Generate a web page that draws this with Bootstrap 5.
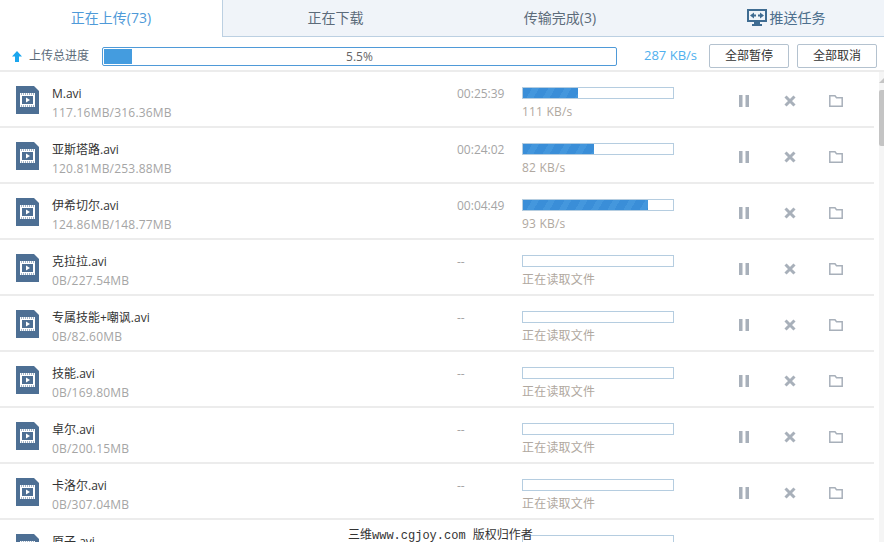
<!DOCTYPE html>
<html lang="zh-CN">
<head>
  <meta charset="UTF-8" />
  <title>传输列表</title>
  <link href="https://cdn.jsdelivr.net/npm/bootstrap@5.3.3/dist/css/bootstrap.min.css" rel="stylesheet">
  <style>
    html, body { height: 546px; overflow: hidden; }
    body { font-family: "Open Sans", "Noto Sans CJK SC", sans-serif; font-size: 13px; color: #333; background: #fff; }
    .tabbar { height: 37px; }
    .tabitem { line-height: 36px; font-size: 14px; color: #5c6b7a; background: #f0f4f9; border-bottom: 1px solid #bcd0e2; text-align: center; }
    .tabitem.on { flex: 0 0 222px; background: #fff; color: #4f9ad8; border-bottom-color: #fff; }
    .tabitem.second { flex: 0 0 226px; border-left: 1px solid #bcd0e2; }
    .tabitem.third { flex: 0 0 224px; }
    .tabitem svg { vertical-align: -3px; margin-right: 3px; }
    .pushtab { flex: 1; padding-left: 16px; color: #4d6f8d; }
    .toolbar { height: 35px; border-bottom: 2px solid #ececec; padding: 5px 7px 0 12px; }
    .uparrow { flex: none; margin-right: 7px; }
    .uplabel { width: 73px; flex: none; color: #5c6b7a; font-size: 12px; white-space: nowrap; }
    .totalbar { width: 515px; flex: none; height: 19px; border: 1px solid #4f9ad8; border-radius: 2px; padding: 1px; font-size: 12px; color: #666; line-height: 15px; }
    .totalfill { height: 15px; background: #449cdf; }
    .totaltext { left: 0; right: 0; top: 1px; text-align: center; }
    .totalspeed { width: 80px; flex: none; text-align: right; color: #4fb0ee; font-size: 13px; }
    .barbtn { width: 80px; flex: none; height: 24px; padding: 0; margin-left: 8px; margin-top: -1px; font-size: 12px; line-height: 21px; color: #333; border: 1px solid #b4c2cf; border-radius: 2px; background: #fff; }
    .barbtn.first { margin-left: 12px; }
    .rowlist { width: 874px; height: 470px; overflow: hidden; }
    .filerow { height: 56px; border-bottom: 2px solid #ececec; }
    .fileicon { width: 23px; margin: 14px 13px 0 16px; flex: none; }
    .fileinfo { width: 405px; flex: none; margin-top: 13px; }
    .fname { font-size: 12px; line-height: 18px; color: #333; }
    .fsize { font-size: 12px; line-height: 18px; color: #a5a5a5; margin-top: 1px; letter-spacing: .2px; }
    .ftime { width: 65px; flex: none; font-size: 12px; color: #a5a5a5; line-height: 18px; margin-top: 13px; }
    .fprog { width: 152px; flex: none; margin-top: 15px; }
    .pbar { height: 12px; border: 1px solid #b5cde0; background: #fff; }
    .pfill { height: 10px; background: repeating-linear-gradient(120deg, #3a8ed8 0 8px, #4497dd 8px 14px); }
    .pnote { font-size: 12px; line-height: 18px; color: #b0a8a0; margin-top: 4px; letter-spacing: .2px; }
    .acts { margin-left: 64px; gap: 34px; margin-top: 22px; }
    .acts svg:last-child { margin-left: -1px; }
    .scrolltrack { position: absolute; top: 72px; right: 0; width: 5px; height: 470px; background: #f5f5f5; }
    .scrollup { position: absolute; top: 6px; left: 0; width: 0; height: 0; border-left: 5px solid transparent; border-bottom: 5px solid #c4c4c4; }
    .scrollthumb { position: absolute; top: 18px; left: 0; width: 5px; height: 56px; background: #c4c4c4; border-radius: 2px 0 0 2px; }
    .stamp { position: absolute; left: 348px; top: 528px; font-size: 12px; line-height: 16px; color: #333; font-family: "Liberation Mono", "Noto Sans CJK SC", monospace; white-space: nowrap; }
  </style>
</head>
<body>
  <svg width="0" height="0" class="d-block">
    <symbol id="vid" viewBox="0 0 23 28">
      <path d="M0 0H18L23 5V28H0Z" fill="#4d6f94"/>
      <path d="M4 7H19V21H4Z" fill="#fff"/>
      <path d="M6 10H17V18H6Z" fill="#4d6f94"/>
      <path d="M10 11.500L14 14L10 16.500Z" fill="#fff"/>
      <path d="M5 8H18M5 20H18" stroke="#4d6f94" stroke-width="1" stroke-dasharray="1 1"/>
    </symbol>
    <symbol id="pause" viewBox="0 0 12 14"><path d="M1 1H4.500V13H1ZM7.500 1H11V13H7.500Z" fill="#a8b0ba"/></symbol>
    <symbol id="cross" viewBox="0 0 12 12"><path d="M1.500 1.500L10.500 10.500M10.500 1.500L1.500 10.500" stroke="#a8b0ba" stroke-width="3"/></symbol>
    <symbol id="folder" viewBox="0 0 14 12"><path d="M.8.8H6L7.500 2.800H13.200V11.200H.8Z" fill="none" stroke="#a8b0ba" stroke-width="1.500"/></symbol>
  </svg>

  <div class="d-flex tabbar">
    <div class="tabitem on">正在上传(73)</div>
    <div class="tabitem second">正在下载</div>
    <div class="tabitem third">传输完成(3)</div>
    <div class="tabitem pushtab">
      <svg width="20" height="17" viewBox="0 0 20 17"><path d="M0 0H20V13H13V15H15V17H5V15H7V13H0Z" fill="#3f6c92"/><path d="M2 2H18V11H2Z" fill="#f0f4f9"/><path d="M3 6.500L7 3.500V5.500H9V7.500H7V9.500ZM17 6.500L13 3.500V5.500H11V7.500H13V9.500Z" fill="#3f6c92"/></svg>推送任务
    </div>
  </div>

  <div class="d-flex align-items-center toolbar">
    <svg width="10" height="11" viewBox="0 0 10 11" class="uparrow"><path d="M5 0L10 5.500H7V11H3V5.500H0Z" fill="#1ba6ee"/></svg>
    <div class="uplabel">上传总进度</div>
    <div class="totalbar position-relative">
      <div class="totalfill" style="width: 5.5%"></div>
      <div class="totaltext position-absolute">5.5%</div>
    </div>
    <div class="totalspeed">287 KB/s</div>
    <button class="btn barbtn first">全部暂停</button>
    <button class="btn barbtn">全部取消</button>
  </div>

  <div class="rowlist" id="rows"></div>

  <div class="scrolltrack"><div class="scrollup"></div><div class="scrollthumb"></div></div>
  <div class="stamp">三维www.cgjoy.com 版权归作者</div>

  <script>
    const files = [
      ["M.avi", "117.16MB/316.36MB", "00:25:39", 36.5, "111 KB/s"],
      ["亚斯塔路.avi", "120.81MB/253.88MB", "00:24:02", 47.5, "82 KB/s"],
      ["伊希切尔.avi", "124.86MB/148.77MB", "00:04:49", 83, "93 KB/s"],
      ["克拉拉.avi", "0B/227.54MB", "--", 0, "正在读取文件"],
      ["专属技能+嘲讽.avi", "0B/82.60MB", "--", 0, "正在读取文件"],
      ["技能.avi", "0B/169.80MB", "--", 0, "正在读取文件"],
      ["卓尔.avi", "0B/200.15MB", "--", 0, "正在读取文件"],
      ["卡洛尔.avi", "0B/307.04MB", "--", 0, "正在读取文件"],
      ["原子.avi", "", "", 0, ""]
    ];
    const use = (id, w, h) => `<svg width="${w}" height="${h}"><use href="#${id}"/></svg>`;
    document.getElementById("rows").innerHTML = files.map(f => `
      <div class="d-flex align-items-start filerow">
        <svg class="fileicon" height="28"><use href="#vid"/></svg>
        <div class="fileinfo">
          <div class="fname">${f[0]}</div>
          <div class="fsize">${f[1]}</div>
        </div>
        <div class="ftime">${f[2]}</div>
        <div class="fprog">
          <div class="pbar"><div class="pfill" style="width: ${f[3]}%"></div></div>
          <div class="pnote">${f[4]}</div>
        </div>
        <div class="d-flex align-items-center acts">
          ${use("pause", 12, 14)}${use("cross", 12, 12)}${use("folder", 14, 12)}
        </div>
      </div>`).join("");
  </script>
  <script src="https://cdn.jsdelivr.net/npm/bootstrap@5.3.3/dist/js/bootstrap.bundle.min.js"></script>
</body>
</html>
